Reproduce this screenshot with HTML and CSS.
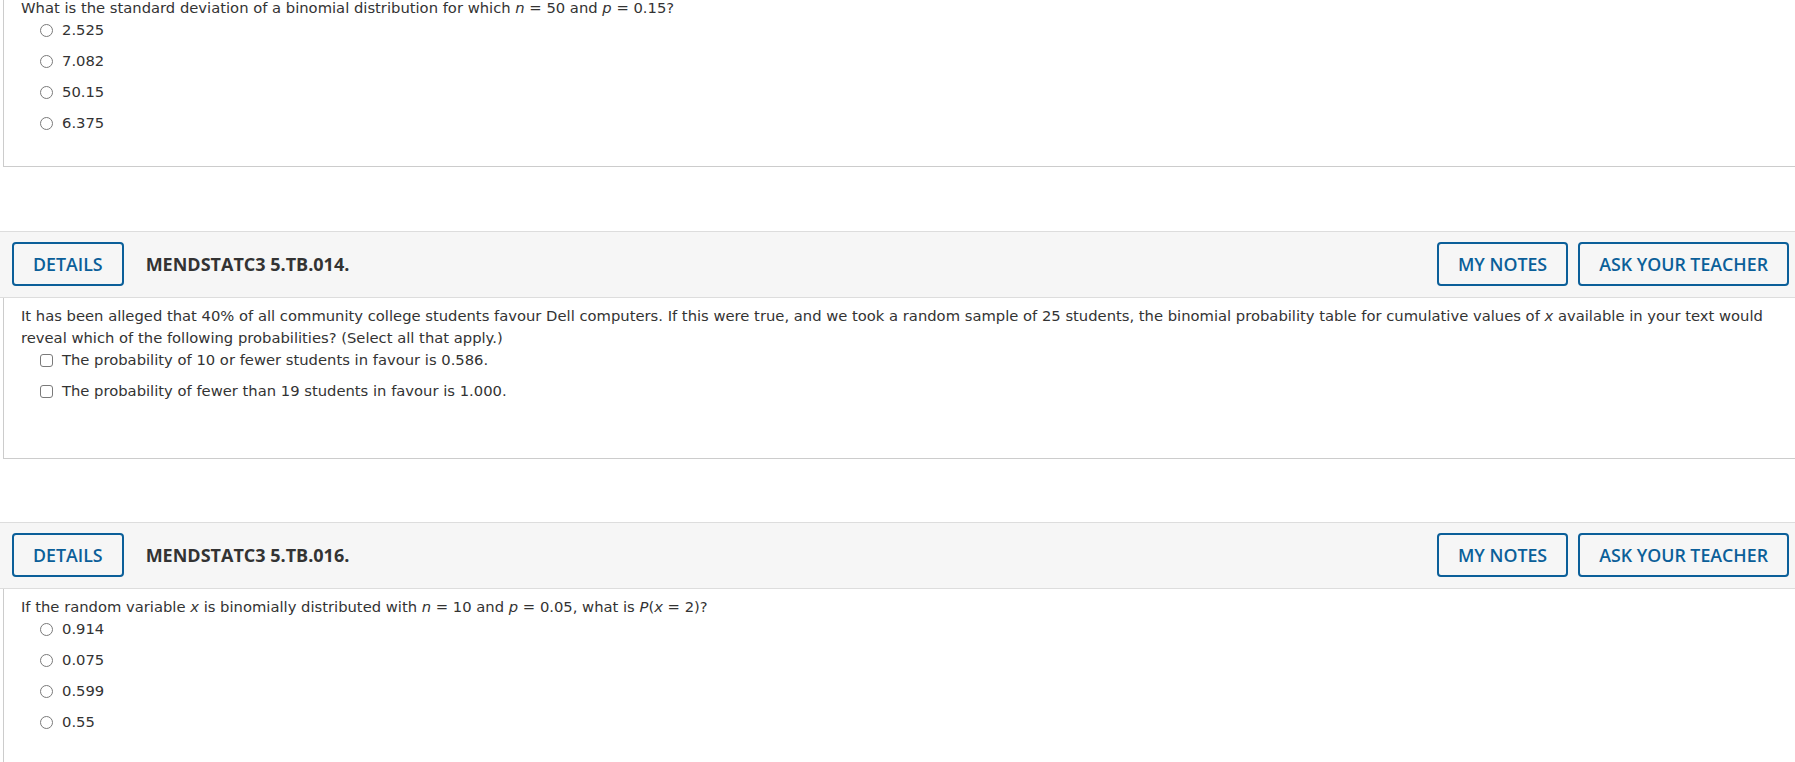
FILE: index.html
```html
<!DOCTYPE html>
<html lang="en">
<head>
<meta charset="utf-8">
<title>Questions</title>
<link rel="stylesheet" href="styles.css">
</head>
<body>
<div class="page">

  <section class="qbody qbody--first">
    <div class="qtext">What is the standard deviation of a binomial distribution for which <i>n</i> = 50 and <i>p</i> = 0.15?</div>
    <div class="options">
      <label class="opt"><span class="radio"></span><span>2.525</span></label>
      <label class="opt"><span class="radio"></span><span>7.082</span></label>
      <label class="opt"><span class="radio"></span><span>50.15</span></label>
      <label class="opt"><span class="radio"></span><span>6.375</span></label>
    </div>
  </section>

  <header class="qhead">
    <button class="btn">DETAILS</button>
    <div class="qtitle">MENDSTATC3 5.TB.014.</div>
    <div class="spacer"></div>
    <button class="btn">MY NOTES</button>
    <button class="btn">ASK YOUR TEACHER</button>
  </header>
  <section class="qbody qbody--tall">
    <div class="qtext">It has been alleged that 40% of all community college students favour Dell computers. If this were true, and we took a random sample of 25 students, the binomial probability table for cumulative values of <i>x</i> available in your text would reveal which of the following probabilities? (Select all that apply.)</div>
    <div class="options">
      <label class="opt"><span class="check"></span><span>The probability of 10 or fewer students in favour is 0.586.</span></label>
      <label class="opt"><span class="check"></span><span>The probability of fewer than 19 students in favour is 1.000.</span></label>
    </div>
  </section>

  <header class="qhead">
    <button class="btn">DETAILS</button>
    <div class="qtitle">MENDSTATC3 5.TB.016.</div>
    <div class="spacer"></div>
    <button class="btn">MY NOTES</button>
    <button class="btn">ASK YOUR TEACHER</button>
  </header>
  <section class="qbody">
    <div class="qtext">If the random variable <i>x</i> is binomially distributed with <i>n</i> = 10 and <i>p</i> = 0.05, what is <i>P</i>(<i>x</i> = 2)?</div>
    <div class="options">
      <label class="opt"><span class="radio"></span><span>0.914</span></label>
      <label class="opt"><span class="radio"></span><span>0.075</span></label>
      <label class="opt"><span class="radio"></span><span>0.599</span></label>
      <label class="opt"><span class="radio"></span><span>0.55</span></label>
    </div>
  </section>

</div>
</body>
</html>
```
FILE: styles.css
```css
html, body {
  margin: 0;
  padding: 0;
  background: #ffffff;
  overflow: hidden;
}

.page {
  font-family: Verdana, "DejaVu Sans", sans-serif;
  font-size: 14.75px;
  line-height: 22px;
  color: #333333;
}

.qbody {
  margin-left: 3px;
  border-left: 1px solid #cccccc;
  border-bottom: 1px solid #cccccc;
  padding: 7px 20px 60px 17px;
}

.qbody--first {
  margin-top: -10px;
  padding-bottom: 32px;
  margin-bottom: 64px;
}

.qbody--tall {
  padding-bottom: 56px;
  margin-bottom: 63px;
}

.qtext i {
  font-style: italic;
}

.options {
  display: flex;
  flex-direction: column;
  gap: 9px;
  padding-left: 19px;
}

.opt {
  display: flex;
  align-items: center;
  gap: 9px;
}

.radio {
  width: 11px;
  height: 11px;
  border: 1px solid #7a7a7a;
  border-radius: 50%;
  background: #ffffff;
  flex: none;
}

.check {
  width: 11px;
  height: 11px;
  border: 1px solid #7a7a7a;
  border-radius: 3px;
  background: #ffffff;
  flex: none;
}

.qhead {
  display: flex;
  align-items: center;
  gap: 10px;
  background: #f6f6f6;
  border-top: 1px solid #dddddd;
  border-bottom: 1px solid #dddddd;
  padding: 10px 6px 11px 12px;
}

.btn {
  height: 44px;
  box-sizing: border-box;
  border: 2px solid #0b5f99;
  border-radius: 4px;
  background: transparent;
  color: #0b5f99;
  font-family: "Open Sans", sans-serif;
  font-weight: 600;
  font-size: 17.8px;
  padding: 0 19px;
  display: flex;
  align-items: center;
}

.qtitle {
  margin-left: 12px;
  font-family: "Open Sans", sans-serif;
  font-weight: 700;
  font-size: 18px;
  color: #333333;
}

.spacer {
  flex: 1;
}
```
